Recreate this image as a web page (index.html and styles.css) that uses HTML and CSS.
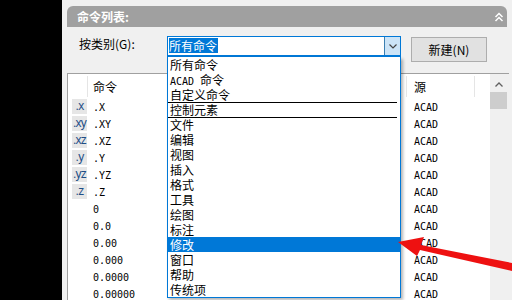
FILE: index.html
```html
<!DOCTYPE html>
<html lang="zh-CN">
<head>
<meta charset="utf-8">
<title>命令列表</title>
<link rel="stylesheet" href="styles.css">
</head>
<body>
<div class="app">
  <div class="sidebar"></div>
  <div class="panel">
    <div class="titlebar">
      <span>命令列表:</span>
      <svg class="collapse" width="10" height="10" viewBox="0 0 10 10"><path d="M1.5 5 L5 1.5 L8.5 5 M1.5 9 L5 5.5 L8.5 9" fill="none" stroke="#fff" stroke-width="1.5"/></svg>
    </div>
    <div class="filter">
      <span class="filter-label">按类别(G):</span>
      <div class="combo">
        <span class="combo-text">所有命令</span>
        <span class="combo-btn"><svg width="8" height="5" viewBox="0 0 8 5"><path d="M0.5 0.5 L4 4 L7.5 0.5" fill="none" stroke="#444" stroke-width="1.2"/></svg></span>
        <ul class="dropdown">
          <li>所有命令</li>
          <li><span class="mono">ACAD </span>命令</li>
          <li>自定义命令</li>
          <li class="sep">控制元素</li>
          <li class="sep">文件</li>
          <li>编辑</li>
          <li>视图</li>
          <li>插入</li>
          <li>格式</li>
          <li>工具</li>
          <li>绘图</li>
          <li>标注</li>
          <li class="selected">修改</li>
          <li>窗口</li>
          <li>帮助</li>
          <li>传统项</li>
        </ul>
      </div>
      <button class="btn">新建(N)</button>
    </div>
    <div class="list">
      <div class="list-main">
        <div class="header">
          <span class="cell c-ico"></span>
          <span class="cell c-cmd">命令</span>
          <span class="cell c-src">源</span>
          <span class="cell c-rest"></span>
        </div>
        <div class="row"><span class="c-ico"><span class="ico">.x</span></span><span class="c-cmd mono">.X</span><span class="c-src mono">ACAD</span></div>
        <div class="row"><span class="c-ico"><span class="ico">.xy</span></span><span class="c-cmd mono">.XY</span><span class="c-src mono">ACAD</span></div>
        <div class="row"><span class="c-ico"><span class="ico">.xz</span></span><span class="c-cmd mono">.XZ</span><span class="c-src mono">ACAD</span></div>
        <div class="row"><span class="c-ico"><span class="ico">.y</span></span><span class="c-cmd mono">.Y</span><span class="c-src mono">ACAD</span></div>
        <div class="row"><span class="c-ico"><span class="ico">.yz</span></span><span class="c-cmd mono">.YZ</span><span class="c-src mono">ACAD</span></div>
        <div class="row"><span class="c-ico"><span class="ico">.z</span></span><span class="c-cmd mono">.Z</span><span class="c-src mono">ACAD</span></div>
        <div class="row"><span class="c-ico"></span><span class="c-cmd mono">0</span><span class="c-src mono">ACAD</span></div>
        <div class="row"><span class="c-ico"></span><span class="c-cmd mono">0.0</span><span class="c-src mono">ACAD</span></div>
        <div class="row"><span class="c-ico"></span><span class="c-cmd mono">0.00</span><span class="c-src mono">ACAD</span></div>
        <div class="row"><span class="c-ico"></span><span class="c-cmd mono">0.000</span><span class="c-src mono">ACAD</span></div>
        <div class="row"><span class="c-ico"></span><span class="c-cmd mono">0.0000</span><span class="c-src mono">ACAD</span></div>
        <div class="row"><span class="c-ico"></span><span class="c-cmd mono">0.00000</span><span class="c-src mono">ACAD</span></div>
      </div>
      <div class="scrollbar">
        <div class="sb-up"><svg width="8" height="5" viewBox="0 0 8 5"><path d="M0.5 4.5 L4 1 L7.5 4.5" fill="none" stroke="#606060" stroke-width="1.3"/></svg></div>
        <div class="sb-thumb"></div>
      </div>
    </div>
  </div>
</div>
<svg class="arrow" width="512" height="300" viewBox="0 0 512 300"><polygon points="398,242 424,237 421,245 512,263 512,271 420,250 417,256" fill="#ee1111"/></svg>
</body>
</html>
```
FILE: styles.css
```css
* { box-sizing: border-box; margin: 0; padding: 0; }
html, body { width: 512px; height: 300px; overflow: hidden; }
body {
  font-family: "Noto Sans CJK SC", "Liberation Sans", sans-serif;
  font-size: 12px;
  color: #000;
  background: #f0f0f0;
  position: relative;
}
.mono { font-family: "DejaVu Sans Mono", "Noto Sans CJK SC", monospace; font-size: 10px; }
.app { display: flex; height: 300px; }
.sidebar { width: 62px; flex: none; background: #000; }
.panel {
  flex: 1;
  min-width: 0;
  display: flex;
  flex-direction: column;
  padding: 6px 3px 0 5px;
}
.titlebar {
  height: 21px;
  margin-right: 2px;
  background: #a0a0a0;
  border-radius: 6px 6px 0 0;
  display: flex;
  align-items: center;
  justify-content: space-between;
  padding: 0 3px 0 10px;
  color: #fff;
  font-weight: bold;
  line-height: 21px;
}
.collapse { display: block; }
.filter {
  display: flex;
  align-items: flex-start;
  height: 26px;
  margin-top: 9px;
  padding-left: 12px;
}
.filter-label { width: 88px; line-height: 15px; flex: none; }
.combo {
  position: relative;
  width: 234px;
  height: 21px;
  flex: none;
  border: 1px solid #0078d7;
  border-bottom-width: 2px;
  background: #fff;
  display: flex;
}
.combo-text {
  margin: 1px 0 0 1px;
  padding-right: 1px;
  height: 15px;
  line-height: 15px;
  background: #0078d7;
  color: #fff;
}
.combo-btn {
  margin-left: auto;
  width: 16px;
  background: #cce4f7;
  border-left: 1px solid #3c7fb1;
  display: flex;
  align-items: center;
  justify-content: center;
}
.combo-btn svg { display: block; }
.dropdown {
  position: absolute;
  left: -1px;
  top: calc(100% + 2px);
  width: 234px;
  list-style: none;
  background: #fff;
  border: 1px solid #0078d7;
  border-top: none;
  box-shadow: 2px 2px 3px rgba(0, 0, 0, 0.3);
  z-index: 5;
}
.dropdown li {
  height: 15px;
  line-height: 15px;
  padding-left: 2px;
  white-space: nowrap;
}
.dropdown li.sep { border-top: 1px solid #000; margin-right: 3px; line-height: 14px; }
.dropdown li.selected { background: #0078d7; color: #fff; }
.btn {
  margin-left: 10px;
  margin-top: 1px;
  width: 76px;
  height: 25px;
  flex: none;
  background: #e1e1e1;
  border: 1px solid #adadad;
  font: inherit;
  color: #000;
}
.list {
  flex: 1;
  min-height: 0;
  margin-top: 11px;
  display: flex;
  border-top: 1px solid #a0a0a0;
  border-left: 1px solid #a0a0a0;
  background: #f0f0f0;
  overflow: hidden;
}
.list-main { width: 422px; flex: none; background: #fff; }
.header { display: flex; align-items: center; height: 25px; }
.header .cell { height: 21px; line-height: 21px; border-right: 1px solid #e5e5e5; }
.c-ico { width: 20px; flex: none; }
.c-cmd { width: 319px; flex: none; padding-left: 5px; }
.c-src { width: 68px; flex: none; padding-left: 7px; }
.header .c-rest { flex: 1; border-right: none; }
.row { display: flex; height: 17px; line-height: 17px; }
.ico {
  display: block;
  width: 15px;
  height: 15px;
  margin-left: 4px;
  background: #e6e6e6;
  color: #1f4f86;
  font-family: "Liberation Sans", sans-serif;
  font-size: 12px;
  line-height: 15px;
  letter-spacing: -0.7px;
  text-align: center;
  white-space: nowrap;
  overflow: visible;
}
.scrollbar { width: 17px; flex: none; display: flex; flex-direction: column; background: #f0f0f0; }
.sb-up { height: 18px; display: flex; align-items: center; justify-content: center; padding-top: 2px; }
.sb-up svg { display: block; }
.sb-thumb { height: 17px; background: #cdcdcd; }
.arrow { position: absolute; left: 0; top: 0; pointer-events: none; z-index: 10; }
```
